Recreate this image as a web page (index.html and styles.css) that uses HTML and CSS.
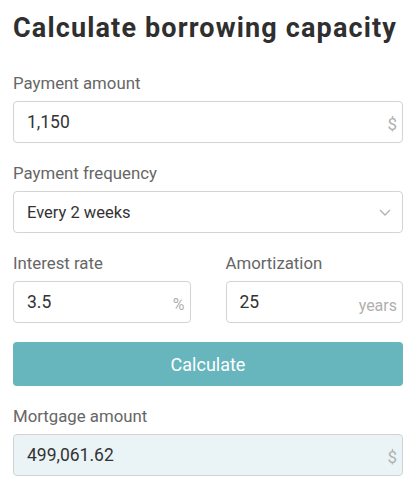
FILE: index.html
```html
<!DOCTYPE html>
<html lang="en">
<head>
  <meta charset="UTF-8" />
  <meta name="viewport" content="width=device-width, initial-scale=1" />
  <title>Calculate borrowing capacity</title>
  <link rel="stylesheet" href="styles.css">
</head>
<body>
  <h1>Calculate borrowing capacity</h1>

  <div class="form-row">
    <label for="payment">Payment amount</label>
    <div class="field">
      <input id="payment" type="text" value="1,150" />
      <span class="unit">$</span>
    </div>
  </div>

  <div class="form-row">
    <label for="frequency">Payment frequency</label>
    <div class="field">
      <select id="frequency">
        <option>Every 2 weeks</option>
        <option>Weekly</option>
        <option>Monthly</option>
      </select>
      <svg class="chevron" width="12" height="7" viewBox="0 0 12 7">
        <path d="M1 1l5 5 5-5" fill="none" stroke="#b3b3b3" stroke-width="1.4" />
      </svg>
    </div>
  </div>

  <div class="form-row cols">
    <div>
      <label for="rate">Interest rate</label>
      <div class="field">
        <input id="rate" type="text" value="3.5" />
        <span class="unit small">%</span>
      </div>
    </div>
    <div>
      <label for="amort">Amortization</label>
      <div class="field">
        <input id="amort" type="text" value="25" />
        <span class="unit years">years</span>
      </div>
    </div>
  </div>

  <button class="calc">Calculate</button>

  <div class="form-row">
    <label for="mortgage">Mortgage amount</label>
    <div class="field result">
      <input id="mortgage" type="text" value="499,061.62" readonly />
      <span class="unit">$</span>
    </div>
  </div>
</body>
</html>
```

FILE: styles.css
```css
body {
  font-family: Roboto, 'Liberation Sans', sans-serif;
  color: #333;
  margin: 0;
  padding: 12px 12px 0 13px;
}
h1 {
  font-size: 27px;
  line-height: 32px;
  font-weight: 700;
  letter-spacing: 1.15px;
  color: #2f2f2f;
  margin: 0 0 29px;
}
.form-row {
  margin-bottom: 20px;
}
label {
  display: block;
  font-size: 16.8px;
  line-height: 20px;
  color: #666;
  margin-bottom: 8px;
}
.cols {
  display: grid;
  grid-template-columns: minmax(0, 1fr) minmax(0, 1fr);
  gap: 35px;
}
.field {
  display: flex;
  align-items: center;
  height: 42px;
  box-sizing: border-box;
  border: 1px solid #d3d3d3;
  border-radius: 4px;
  padding: 0 5px 0 13px;
  background: #fff;
}
.field input,
.field select {
  flex: 1;
  width: 100%;
  min-width: 0;
  border: none;
  outline: none;
  background: transparent;
  font-family: inherit;
  font-size: 17.5px;
  color: #333;
  padding: 0;
}
.field select {
  -webkit-appearance: none;
  appearance: none;
  font-size: 16.5px;
}
.chevron {
  margin-right: 6px;
}
.unit {
  font-size: 17px;
  color: #b0b0b0;
  padding-top: 4px;
}
.unit.small {
  font-size: 16px;
}
.unit.years {
  font-size: 16px;
  padding-top: 6px;
}
.calc {
  display: block;
  width: 100%;
  height: 44px;
  margin: -1px 0 20px;
  border: none;
  border-radius: 4px;
  background: #67b6bd;
  color: #fff;
  font-family: inherit;
  font-size: 18px;
  cursor: pointer;
}
.result {
  background: #eaf4f7;
}
```
